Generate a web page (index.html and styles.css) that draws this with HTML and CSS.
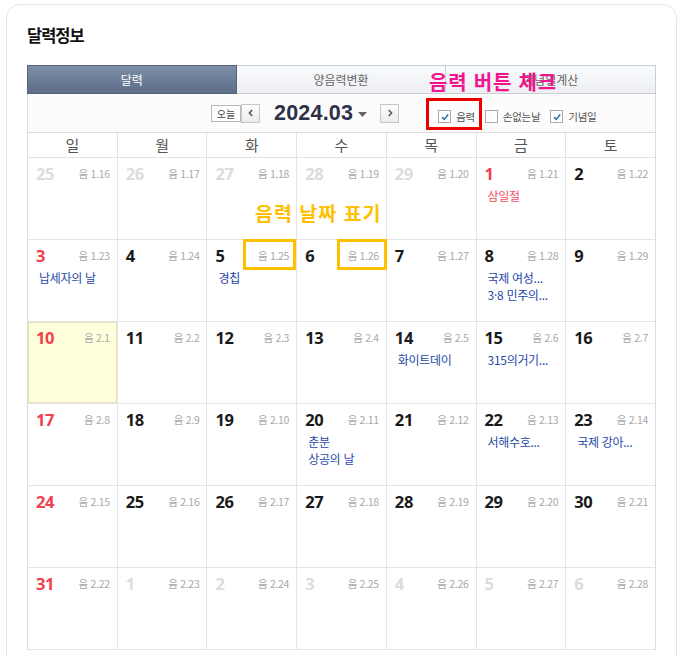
FILE: index.html
```html
<!DOCTYPE html>
<html lang="ko">
<head>
<meta charset="utf-8">
<title>달력정보</title>
<link rel="stylesheet" href="styles.css">
</head>
<body>
<div class="page">
  <section class="card">
    <h2 class="title">달력정보</h2>
    <div class="cal">
      <div class="tabs">
        <div class="tab on">달력</div>
        <div class="tab">양음력변환</div>
        <div class="tab">기념일계산</div>
      </div>
      <div class="toolbar">
        <button class="today-btn">오늘</button>
        <button class="nav-btn"><svg width="10" height="10" viewBox="0 0 10 10"><path d="M6.2 2 L3.4 5 L6.2 8" fill="none" stroke="#555" stroke-width="1.5"/></svg></button>
        <span class="month">2024.03</span>
        <svg class="caret" width="9" height="5" viewBox="0 0 9 5"><path d="M0 0 H9 L4.5 5 Z" fill="#666"/></svg>
        <button class="nav-btn next"><svg width="10" height="10" viewBox="0 0 10 10"><path d="M3.8 2 L6.6 5 L3.8 8" fill="none" stroke="#555" stroke-width="1.5"/></svg></button>
        <div class="checks">
          <label class="chk"><span class="box"><svg width="10" height="10" viewBox="0 0 10 10"><path d="M2 5.2 L4.2 7.4 L8.2 2.6" fill="none" stroke="#2f6db5" stroke-width="1.6"/></svg></span>음력</label>
          <label class="chk"><span class="box"></span>손없는날</label>
          <label class="chk"><span class="box"><svg width="10" height="10" viewBox="0 0 10 10"><path d="M2 5.2 L4.2 7.4 L8.2 2.6" fill="none" stroke="#2f6db5" stroke-width="1.6"/></svg></span>기념일</label>
        </div>
      </div>
      <div class="week-head">
        <div>일</div><div>월</div><div>화</div><div>수</div><div>목</div><div>금</div><div>토</div>
      </div>
      <div class="grid">
        <div class="cell other"><div class="top"><span class="d">25</span><span class="lu">음 1.16</span></div></div>
        <div class="cell other"><div class="top"><span class="d">26</span><span class="lu">음 1.17</span></div></div>
        <div class="cell other"><div class="top"><span class="d">27</span><span class="lu">음 1.18</span></div></div>
        <div class="cell other"><div class="top"><span class="d">28</span><span class="lu">음 1.19</span></div></div>
        <div class="cell other"><div class="top"><span class="d">29</span><span class="lu">음 1.20</span></div></div>
        <div class="cell red"><div class="top"><span class="d">1</span><span class="lu">음 1.21</span></div><p class="ev hol">삼일절</p></div>
        <div class="cell"><div class="top"><span class="d">2</span><span class="lu">음 1.22</span></div></div>

        <div class="cell red"><div class="top"><span class="d">3</span><span class="lu">음 1.23</span></div><p class="ev">납세자의 날</p></div>
        <div class="cell"><div class="top"><span class="d">4</span><span class="lu">음 1.24</span></div></div>
        <div class="cell"><div class="top"><span class="d">5</span><span class="lu">음 1.25</span></div><p class="ev">경칩</p></div>
        <div class="cell"><div class="top"><span class="d">6</span><span class="lu">음 1.26</span></div></div>
        <div class="cell"><div class="top"><span class="d">7</span><span class="lu">음 1.27</span></div></div>
        <div class="cell"><div class="top"><span class="d">8</span><span class="lu">음 1.28</span></div><p class="ev">국제 여성...</p><p class="ev">3·8 민주의...</p></div>
        <div class="cell"><div class="top"><span class="d">9</span><span class="lu">음 1.29</span></div></div>

        <div class="cell red today"><div class="top"><span class="d">10</span><span class="lu">음 2.1</span></div></div>
        <div class="cell"><div class="top"><span class="d">11</span><span class="lu">음 2.2</span></div></div>
        <div class="cell"><div class="top"><span class="d">12</span><span class="lu">음 2.3</span></div></div>
        <div class="cell"><div class="top"><span class="d">13</span><span class="lu">음 2.4</span></div></div>
        <div class="cell"><div class="top"><span class="d">14</span><span class="lu">음 2.5</span></div><p class="ev">화이트데이</p></div>
        <div class="cell"><div class="top"><span class="d">15</span><span class="lu">음 2.6</span></div><p class="ev">315의거기...</p></div>
        <div class="cell"><div class="top"><span class="d">16</span><span class="lu">음 2.7</span></div></div>

        <div class="cell red"><div class="top"><span class="d">17</span><span class="lu">음 2.8</span></div></div>
        <div class="cell"><div class="top"><span class="d">18</span><span class="lu">음 2.9</span></div></div>
        <div class="cell"><div class="top"><span class="d">19</span><span class="lu">음 2.10</span></div></div>
        <div class="cell"><div class="top"><span class="d">20</span><span class="lu">음 2.11</span></div><p class="ev">춘분</p><p class="ev">상공의 날</p></div>
        <div class="cell"><div class="top"><span class="d">21</span><span class="lu">음 2.12</span></div></div>
        <div class="cell"><div class="top"><span class="d">22</span><span class="lu">음 2.13</span></div><p class="ev">서해수호...</p></div>
        <div class="cell"><div class="top"><span class="d">23</span><span class="lu">음 2.14</span></div><p class="ev">국제 강아...</p></div>

        <div class="cell red"><div class="top"><span class="d">24</span><span class="lu">음 2.15</span></div></div>
        <div class="cell"><div class="top"><span class="d">25</span><span class="lu">음 2.16</span></div></div>
        <div class="cell"><div class="top"><span class="d">26</span><span class="lu">음 2.17</span></div></div>
        <div class="cell"><div class="top"><span class="d">27</span><span class="lu">음 2.18</span></div></div>
        <div class="cell"><div class="top"><span class="d">28</span><span class="lu">음 2.19</span></div></div>
        <div class="cell"><div class="top"><span class="d">29</span><span class="lu">음 2.20</span></div></div>
        <div class="cell"><div class="top"><span class="d">30</span><span class="lu">음 2.21</span></div></div>

        <div class="cell red"><div class="top"><span class="d">31</span><span class="lu">음 2.22</span></div></div>
        <div class="cell other"><div class="top"><span class="d">1</span><span class="lu">음 2.23</span></div></div>
        <div class="cell other"><div class="top"><span class="d">2</span><span class="lu">음 2.24</span></div></div>
        <div class="cell other"><div class="top"><span class="d">3</span><span class="lu">음 2.25</span></div></div>
        <div class="cell other"><div class="top"><span class="d">4</span><span class="lu">음 2.26</span></div></div>
        <div class="cell other"><div class="top"><span class="d">5</span><span class="lu">음 2.27</span></div></div>
        <div class="cell other"><div class="top"><span class="d">6</span><span class="lu">음 2.28</span></div></div>
      </div>
    </div>
  </section>

  <div class="note note-pink">음력 버튼 체크</div>
  <div class="mark mark-red"></div>
  <div class="note note-yellow">음력 날짜 표기</div>
  <div class="mark mark-yellow m1"></div>
  <div class="mark mark-yellow m2"></div>
</div>
</body>
</html>
```

FILE: styles.css
```css
* { box-sizing: border-box; }
html, body { margin: 0; padding: 0; background: #fff; }
body {
  font-family: "Noto Sans CJK KR", "Noto Sans", "Liberation Sans", sans-serif;
  color: #222;
  overflow: hidden;
}
.page { position: relative; width: 685px; height: 656px; overflow: hidden; }

.card {
  margin: 4px 8px 0 6px;
  border: 1px solid #e6e6e6;
  border-radius: 14px;
  padding: 18px 20px 0 20px;
  height: 720px;
}
.title {
  margin: 0 0 18px 0;
  font-size: 16.5px;
  line-height: 24px;
  font-weight: 600;
  letter-spacing: -1px;
  color: #111;
}

.cal { width: 629px; }

.tabs {
  display: grid;
  grid-template-columns: 1fr 1fr 1fr;
  height: 29px;
}
.tab {
  display: flex;
  align-items: center;
  justify-content: center;
  font-size: 12px;
  color: #666;
  background: linear-gradient(#fafbfc, #eceef2);
  border: 1px solid #c9cdd4;
  border-left: none;
}
.tab.on {
  color: #fff;
  background: linear-gradient(#7d8ea8, #5d6d87);
  border: 1px solid #55647c;
}

.toolbar {
  height: 39px;
  display: flex;
  align-items: center;
  padding-left: 183px;
  background: #fcfcfc;
  border-left: 1px solid #dcdcdc;
  border-right: 1px solid #dcdcdc;
  border-bottom: 1px solid #dcdcdc;
}
.toolbar button {
  font-family: inherit;
  padding: 0;
  margin: 0;
  cursor: pointer;
}
.today-btn {
  width: 30px;
  height: 17px;
  border: 1px solid #b8b8b8;
  background: #fff;
  font-size: 10px;
  line-height: 15px;
  color: #444;
  margin-top: 1px;
}
.nav-btn {
  width: 19px;
  height: 19px;
  margin-left: 5px;
  border: 1px solid #c6c6c6;
  background: linear-gradient(#fdfdfd, #ececec);
  display: flex;
  align-items: center;
  justify-content: center;
}
.nav-btn.next { margin-left: 13px; }
.month {
  margin-left: 14px;
  font-family: "Liberation Sans", Arial, sans-serif;
  font-weight: 700;
  font-size: 21.5px;
  line-height: 24px;
  color: #2d3047;
  letter-spacing: 0.2px;
}
.caret { margin-left: 5px; margin-top: 2px; }

.checks {
  display: flex;
  align-items: center;
  margin-left: 39px;
  padding-top: 7px;
}
.chk {
  display: flex;
  align-items: center;
  font-size: 10.5px;
  line-height: 14px;
  color: #555;
  margin-right: 10px;
  letter-spacing: -0.3px;
}
.box {
  width: 13px;
  height: 13px;
  border: 1px solid #a9a9a9;
  background: #fff;
  margin-right: 5px;
  display: flex;
  align-items: center;
  justify-content: center;
}

.week-head {
  display: grid;
  grid-template-columns: repeat(7, 1fr);
  height: 25px;
  border-left: 1px solid #dcdcdc;
  border-bottom: 1px solid #e2e2e2;
}
.week-head div {
  border-right: 1px solid #e2e2e2;
  text-align: center;
  font-size: 15px;
  line-height: 24px;
  color: #555;
}
.week-head div:last-child { border-right-color: #dcdcdc; }

.grid {
  display: grid;
  grid-template-columns: repeat(7, 1fr);
  grid-auto-rows: 82px;
  border-left: 1px solid #dcdcdc;
}
.cell {
  border-right: 1px solid #e4e4e4;
  border-bottom: 1px solid #e4e4e4;
  padding: 6px 7px 0 8px;
  min-width: 0;
}
.cell:nth-child(7n) { border-right-color: #dcdcdc; }
.top {
  display: flex;
  justify-content: space-between;
  align-items: center;
  height: 20px;
}
.d {
  font-family: "Noto Sans", "Liberation Sans", sans-serif;
  font-weight: 700;
  font-size: 16.5px;
  line-height: 20px;
  color: #1a1a1a;
  letter-spacing: -0.4px;
}
.lu {
  font-size: 10.5px;
  line-height: 14px;
  color: #a9a9a9;
  letter-spacing: -0.3px;
}
.cell.red .d { color: #f2404c; }
.cell.other .d { color: #dcdcdc; }
.cell.today {
  background: #ffffdc;
  box-shadow: inset 0 0 0 1px #e7e2b4;
}
.ev {
  margin: 0;
  padding-left: 3px;
  font-size: 12px;
  line-height: 17px;
  color: #2548a8;
  letter-spacing: -0.3px;
  white-space: nowrap;
}
.top + .ev { margin-top: 3px; }
.ev.hol { color: #f0505f; }

.note {
  position: absolute;
  font-weight: 700;
  white-space: nowrap;
  line-height: 1;
}
.note-pink {
  left: 429px;
  top: 72px;
  font-size: 20px;
  color: #f2138f;
  letter-spacing: 0.8px;
}
.note-yellow {
  left: 255px;
  top: 203px;
  font-size: 19.5px;
  color: #ffc000;
  letter-spacing: 1px;
}
.mark { position: absolute; border: 3px solid; }
.mark-red {
  left: 426px;
  top: 98px;
  width: 56px;
  height: 32px;
  border-color: #ee0000;
}
.mark-yellow {
  top: 239px;
  height: 31px;
  border-color: #ffc000;
}
.m1 { left: 243px; width: 53px; }
.m2 { left: 337px; width: 50px; }
```
